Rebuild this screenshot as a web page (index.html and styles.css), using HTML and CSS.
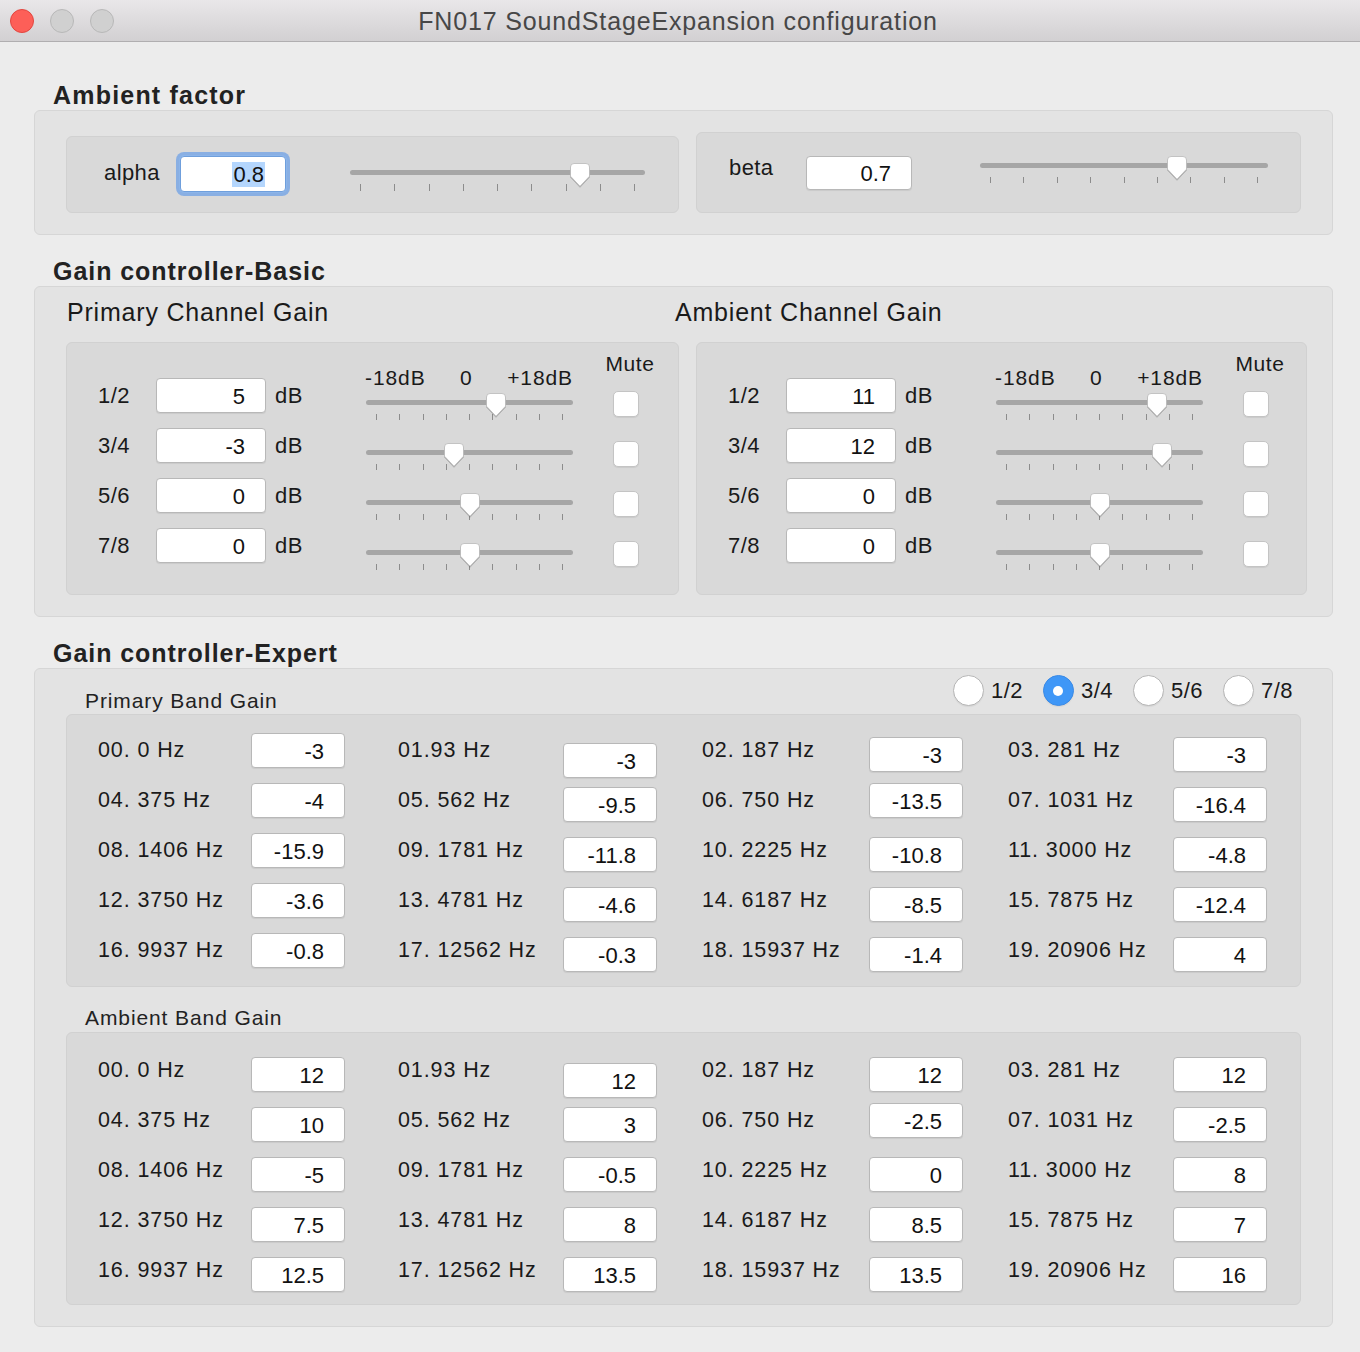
FILE: index.html
```html
<!DOCTYPE html>
<html>
<head>
<meta charset="utf-8">
<title>FN017 SoundStageExpansion configuration</title>
<link rel="stylesheet" href="styles.css">
</head>
<body>
<div class="titlebar">
  <div class="lights"><span class="light close"></span><span class="light"></span><span class="light"></span></div>
  <div class="title">FN017 SoundStageExpansion configuration</div>
  <div></div>
</div>

<div class="content">
  <h2 class="sec-title first">Ambient factor</h2>
  <div class="panel factor-panel">
    <div class="subbox alpha-box">
      <span class="flabel alpha-label">alpha</span>
      <div class="fld alpha-fld focus"><span class="sel">0.8</span></div>
      <div class="slider alpha-slider">
        <div class="track"></div>
        <div class="ticks tall"><i></i><i></i><i></i><i></i><i></i><i></i><i></i><i></i><i></i></div>
        <svg class="thumb" style="left:230px" viewBox="0 0 20 24" width="20" height="24"><path d="M4 .5h12a3.5 3.5 0 0 1 3.5 3.5v9.2L10 23.3.5 13.2V4A3.5 3.5 0 0 1 4 .5z" fill="#fff" stroke="#b9b9b9" stroke-width=".8"/></svg>
      </div>
    </div>
    <div class="subbox beta-box">
      <span class="flabel beta-label">beta</span>
      <div class="fld beta-fld">0.7</div>
      <div class="slider beta-slider">
        <div class="track"></div>
        <div class="ticks"><i></i><i></i><i></i><i></i><i></i><i></i><i></i><i></i><i></i></div>
        <svg class="thumb" style="left:197px" viewBox="0 0 20 24" width="20" height="24"><path d="M4 .5h12a3.5 3.5 0 0 1 3.5 3.5v9.2L10 23.3.5 13.2V4A3.5 3.5 0 0 1 4 .5z" fill="#fff" stroke="#b9b9b9" stroke-width=".8"/></svg>
      </div>
    </div>
  </div>

  <h2 class="sec-title">Gain controller-Basic</h2>
  <div class="panel basic-panel">
    <div class="chan-titles"><span class="chan-title first">Primary Channel Gain</span><span class="chan-title">Ambient Channel Gain</span></div>
    <div class="chan-boxes">
      <div class="subbox chan-box">
        <div class="chead">
          <div class="chead-spacer"></div>
          <div class="scale"><span>-18dB</span><span>0</span><span>+18dB</span></div>
          <div class="mute-label">Mute</div>
        </div>
        <div class="crow">
          <span class="clabel">1/2</span><div class="fld cfld">5</div><span class="cdb">dB</span>
          <div class="slider cslider"><div class="track"></div><div class="ticks"><i></i><i></i><i></i><i></i><i></i><i></i><i></i><i></i><i></i></div><svg class="thumb" style="left:130px" viewBox="0 0 20 24" width="20" height="24"><path d="M4 .5h12a3.5 3.5 0 0 1 3.5 3.5v9.2L10 23.3.5 13.2V4A3.5 3.5 0 0 1 4 .5z" fill="#fff" stroke="#b9b9b9" stroke-width=".8"/></svg></div>
          <span class="cb"></span>
        </div>
        <div class="crow">
          <span class="clabel">3/4</span><div class="fld cfld">-3</div><span class="cdb">dB</span>
          <div class="slider cslider"><div class="track"></div><div class="ticks"><i></i><i></i><i></i><i></i><i></i><i></i><i></i><i></i><i></i></div><svg class="thumb" style="left:88px" viewBox="0 0 20 24" width="20" height="24"><path d="M4 .5h12a3.5 3.5 0 0 1 3.5 3.5v9.2L10 23.3.5 13.2V4A3.5 3.5 0 0 1 4 .5z" fill="#fff" stroke="#b9b9b9" stroke-width=".8"/></svg></div>
          <span class="cb"></span>
        </div>
        <div class="crow">
          <span class="clabel">5/6</span><div class="fld cfld">0</div><span class="cdb">dB</span>
          <div class="slider cslider"><div class="track"></div><div class="ticks"><i></i><i></i><i></i><i></i><i></i><i></i><i></i><i></i><i></i></div><svg class="thumb" style="left:104px" viewBox="0 0 20 24" width="20" height="24"><path d="M4 .5h12a3.5 3.5 0 0 1 3.5 3.5v9.2L10 23.3.5 13.2V4A3.5 3.5 0 0 1 4 .5z" fill="#fff" stroke="#b9b9b9" stroke-width=".8"/></svg></div>
          <span class="cb"></span>
        </div>
        <div class="crow">
          <span class="clabel">7/8</span><div class="fld cfld">0</div><span class="cdb">dB</span>
          <div class="slider cslider"><div class="track"></div><div class="ticks"><i></i><i></i><i></i><i></i><i></i><i></i><i></i><i></i><i></i></div><svg class="thumb" style="left:104px" viewBox="0 0 20 24" width="20" height="24"><path d="M4 .5h12a3.5 3.5 0 0 1 3.5 3.5v9.2L10 23.3.5 13.2V4A3.5 3.5 0 0 1 4 .5z" fill="#fff" stroke="#b9b9b9" stroke-width=".8"/></svg></div>
          <span class="cb"></span>
        </div>
      </div>

      <div class="subbox chan-box right">
        <div class="chead">
          <div class="chead-spacer"></div>
          <div class="scale"><span>-18dB</span><span>0</span><span>+18dB</span></div>
          <div class="mute-label">Mute</div>
        </div>
        <div class="crow">
          <span class="clabel">1/2</span><div class="fld cfld">11</div><span class="cdb">dB</span>
          <div class="slider cslider"><div class="track"></div><div class="ticks"><i></i><i></i><i></i><i></i><i></i><i></i><i></i><i></i><i></i></div><svg class="thumb" style="left:161px" viewBox="0 0 20 24" width="20" height="24"><path d="M4 .5h12a3.5 3.5 0 0 1 3.5 3.5v9.2L10 23.3.5 13.2V4A3.5 3.5 0 0 1 4 .5z" fill="#fff" stroke="#b9b9b9" stroke-width=".8"/></svg></div>
          <span class="cb"></span>
        </div>
        <div class="crow">
          <span class="clabel">3/4</span><div class="fld cfld">12</div><span class="cdb">dB</span>
          <div class="slider cslider"><div class="track"></div><div class="ticks"><i></i><i></i><i></i><i></i><i></i><i></i><i></i><i></i><i></i></div><svg class="thumb" style="left:166px" viewBox="0 0 20 24" width="20" height="24"><path d="M4 .5h12a3.5 3.5 0 0 1 3.5 3.5v9.2L10 23.3.5 13.2V4A3.5 3.5 0 0 1 4 .5z" fill="#fff" stroke="#b9b9b9" stroke-width=".8"/></svg></div>
          <span class="cb"></span>
        </div>
        <div class="crow">
          <span class="clabel">5/6</span><div class="fld cfld">0</div><span class="cdb">dB</span>
          <div class="slider cslider"><div class="track"></div><div class="ticks"><i></i><i></i><i></i><i></i><i></i><i></i><i></i><i></i><i></i></div><svg class="thumb" style="left:104px" viewBox="0 0 20 24" width="20" height="24"><path d="M4 .5h12a3.5 3.5 0 0 1 3.5 3.5v9.2L10 23.3.5 13.2V4A3.5 3.5 0 0 1 4 .5z" fill="#fff" stroke="#b9b9b9" stroke-width=".8"/></svg></div>
          <span class="cb"></span>
        </div>
        <div class="crow">
          <span class="clabel">7/8</span><div class="fld cfld">0</div><span class="cdb">dB</span>
          <div class="slider cslider"><div class="track"></div><div class="ticks"><i></i><i></i><i></i><i></i><i></i><i></i><i></i><i></i><i></i></div><svg class="thumb" style="left:104px" viewBox="0 0 20 24" width="20" height="24"><path d="M4 .5h12a3.5 3.5 0 0 1 3.5 3.5v9.2L10 23.3.5 13.2V4A3.5 3.5 0 0 1 4 .5z" fill="#fff" stroke="#b9b9b9" stroke-width=".8"/></svg></div>
          <span class="cb"></span>
        </div>
      </div>
    </div>
  </div>

  <h2 class="sec-title">Gain controller-Expert</h2>
  <div class="panel expert-panel">
    <div class="band-head">
      <span class="band-title">Primary Band Gain</span>
      <div class="radios">
        <label class="ritem"><span class="radio"></span><span class="rlabel">1/2</span></label>
        <label class="ritem"><span class="radio on"></span><span class="rlabel">3/4</span></label>
        <label class="ritem"><span class="radio"></span><span class="rlabel">5/6</span></label>
        <label class="ritem last"><span class="radio"></span><span class="rlabel">7/8</span></label>
      </div>
    </div>
    <div class="subbox band-box">
      <div class="bgrid">
        <span class="blabel">00. 0 Hz</span><div class="fld bfld">-3</div>
        <span class="blabel">01.93 Hz</span><div class="fld bfld dn2">-3</div>
        <span class="blabel">02. 187 Hz</span><div class="fld bfld dn">-3</div>
        <span class="blabel">03. 281 Hz</span><div class="fld bfld dn">-3</div>

        <span class="blabel">04. 375 Hz</span><div class="fld bfld">-4</div>
        <span class="blabel">05. 562 Hz</span><div class="fld bfld dn">-9.5</div>
        <span class="blabel">06. 750 Hz</span><div class="fld bfld">-13.5</div>
        <span class="blabel">07. 1031 Hz</span><div class="fld bfld dn">-16.4</div>

        <span class="blabel">08. 1406 Hz</span><div class="fld bfld">-15.9</div>
        <span class="blabel">09. 1781 Hz</span><div class="fld bfld dn">-11.8</div>
        <span class="blabel">10. 2225 Hz</span><div class="fld bfld dn">-10.8</div>
        <span class="blabel">11. 3000 Hz</span><div class="fld bfld dn">-4.8</div>

        <span class="blabel">12. 3750 Hz</span><div class="fld bfld">-3.6</div>
        <span class="blabel">13. 4781 Hz</span><div class="fld bfld dn">-4.6</div>
        <span class="blabel">14. 6187 Hz</span><div class="fld bfld dn">-8.5</div>
        <span class="blabel">15. 7875 Hz</span><div class="fld bfld dn">-12.4</div>

        <span class="blabel">16. 9937 Hz</span><div class="fld bfld">-0.8</div>
        <span class="blabel">17. 12562 Hz</span><div class="fld bfld dn">-0.3</div>
        <span class="blabel">18. 15937 Hz</span><div class="fld bfld dn">-1.4</div>
        <span class="blabel">19. 20906 Hz</span><div class="fld bfld dn">4</div>
      </div>
    </div>

    <div class="band-head second">
      <span class="band-title">Ambient Band Gain</span>
    </div>
    <div class="subbox band-box amb">
      <div class="bgrid">
        <span class="blabel">00. 0 Hz</span><div class="fld bfld dn">12</div>
        <span class="blabel">01.93 Hz</span><div class="fld bfld dn2">12</div>
        <span class="blabel">02. 187 Hz</span><div class="fld bfld dn">12</div>
        <span class="blabel">03. 281 Hz</span><div class="fld bfld dn">12</div>

        <span class="blabel">04. 375 Hz</span><div class="fld bfld dn">10</div>
        <span class="blabel">05. 562 Hz</span><div class="fld bfld dn">3</div>
        <span class="blabel">06. 750 Hz</span><div class="fld bfld">-2.5</div>
        <span class="blabel">07. 1031 Hz</span><div class="fld bfld dn">-2.5</div>

        <span class="blabel">08. 1406 Hz</span><div class="fld bfld dn">-5</div>
        <span class="blabel">09. 1781 Hz</span><div class="fld bfld dn">-0.5</div>
        <span class="blabel">10. 2225 Hz</span><div class="fld bfld dn">0</div>
        <span class="blabel">11. 3000 Hz</span><div class="fld bfld dn">8</div>

        <span class="blabel">12. 3750 Hz</span><div class="fld bfld dn">7.5</div>
        <span class="blabel">13. 4781 Hz</span><div class="fld bfld dn">8</div>
        <span class="blabel">14. 6187 Hz</span><div class="fld bfld dn">8.5</div>
        <span class="blabel">15. 7875 Hz</span><div class="fld bfld dn">7</div>

        <span class="blabel">16. 9937 Hz</span><div class="fld bfld dn">12.5</div>
        <span class="blabel">17. 12562 Hz</span><div class="fld bfld dn">13.5</div>
        <span class="blabel">18. 15937 Hz</span><div class="fld bfld dn">13.5</div>
        <span class="blabel">19. 20906 Hz</span><div class="fld bfld dn">16</div>
      </div>
    </div>
  </div>
</div>
</body>
</html>
```

FILE: styles.css
```css
* { box-sizing: border-box; }
html, body { margin: 0; padding: 0; }
body {
  width: 1360px;
  height: 1352px;
  overflow: hidden;
  background: #ececec;
  font-family: "Liberation Sans", Arial, sans-serif;
  color: #1a1a1a;
}

/* ---------- title bar ---------- */
.titlebar {
  height: 42px;
  background: linear-gradient(#e9e7e9, #d2d0d2);
  border-bottom: 1px solid #b0aeb0;
  display: grid;
  grid-template-columns: 1fr auto 1fr;
  align-items: center;
}
.lights { display: flex; gap: 16px; padding-left: 10px; }
.light {
  width: 24px; height: 24px; border-radius: 50%;
  background: #d0d0d0; border: 1px solid #b8b8b8;
}
.light.close { background: #fd5f58; border-color: #e2463f; }
.title {
  font-size: 25px;
  letter-spacing: 0.85px;
  color: #474747;
  line-height: 28px;
  margin-left: -4px;
}

/* ---------- content ---------- */
.content { padding: 0 27px 0 34px; }
.sec-title {
  margin: 22px 0 1px 19px;
  font-size: 25px;
  line-height: 28px;
  font-weight: bold;
  letter-spacing: 0.95px;
  color: #222;
}
.sec-title.first { margin-top: 39px; letter-spacing: 1.2px; }

.panel {
  background: #e3e3e3;
  border: 1px solid #d6d6d6;
  border-radius: 6px;
}
.subbox {
  background: #d9d9d9;
  border: 1px solid #d1d1d1;
  border-radius: 6px;
}

/* fields */
.fld {
  background: #fff;
  border: 1px solid #b8b8b8;
  border-radius: 4px;
  box-shadow: 0 1px 1px rgba(0,0,0,0.07);
  text-align: right;
  padding: 2px 20px 0 0;
  font-size: 22px;
  line-height: 31px;
  height: 35px;
  color: #111;
}

/* sliders */
.slider { position: relative; }
.track { height: 5px; border-radius: 3px; background: #a6a6a6; }
.ticks {
  display: flex; justify-content: space-between;
  padding: 0 10px; margin-top: 9px; height: 6px;
}
.ticks.tall { height: 7px; }
.ticks i { display: block; width: 1px; height: 100%; background: #8c8c8c; }
.thumb {
  position: absolute; top: -7px; margin-left: -10px;
  filter: drop-shadow(0 1px 0.6px rgba(0,0,0,0.22));
}

/* ambient factor */
.factor-panel {
  height: 125px;
  padding: 21px 31px;
  display: flex;
  align-items: flex-end;
  gap: 17px;
}
.alpha-box {
  width: 613px; height: 77px;
  display: flex; align-items: flex-start;
  padding: 19px 0 0 37px;
}
.flabel { font-size: 22px; letter-spacing: 0.4px; }
.alpha-label { width: 76px; line-height: 33px; }
.alpha-fld {
  width: 106px; height: 36px; line-height: 32px;
}
.focus {
  border-color: #6f9fdc;
  box-shadow: 0 0 0 1px #8cb5ea, 0 0 0 4px rgba(110, 160, 230, 0.75);
}
.sel { background: #b4d6fd; padding: 0 1px; }
.alpha-slider { width: 295px; margin: 13.5px 0 0 64px; }

.beta-box {
  width: 605px; height: 81px;
  display: flex; align-items: flex-start;
  padding: 23px 0 0 32px;
}
.beta-label { width: 77px; line-height: 24px; }
.beta-fld { width: 106px; height: 34px; line-height: 30px; }
.beta-slider { width: 288px; margin: 6.5px 0 0 68px; }

/* basic */
.basic-panel { padding: 11px 25px 21px 31px; }
.chan-titles { display: flex; height: 28px; margin-bottom: 16px; }
.chan-title { font-size: 25px; line-height: 28px; letter-spacing: 0.8px; }
.chan-title.first { width: 609px; padding-left: 1px; }
.chan-boxes { display: flex; gap: 17px; }
.chan-box { width: 613px; height: 253px; padding: 9px 0 0 31px; }
.chan-box.right { width: 611px; }
.chead { display: flex; height: 26px; align-items: flex-start; }
.chead-spacer { width: 268px; }
.scale {
  width: 208px; margin-left: -1px; margin-top: 14px;
  display: flex; justify-content: space-between;
  font-size: 21px; line-height: 24px; letter-spacing: 0.9px;
}
.mute-label {
  margin-left: 31px; width: 52px; text-align: center;
  font-size: 21px; line-height: 24px; letter-spacing: 0.6px;
}
.crow { display: flex; height: 50px; align-items: flex-start; }
.clabel { width: 58px; line-height: 35px; font-size: 22px; letter-spacing: 0.5px; }
.cfld { width: 110px; }
.cdb { width: 100px; padding-left: 9px; line-height: 35px; font-size: 22px; letter-spacing: 0.5px; }
.cslider { width: 207px; margin-top: 21.5px; }
.cb {
  display: block; width: 26px; height: 26px; margin: 13px 0 0 40px;
  background: #fff; border: 1px solid #c4c4c4; border-radius: 5px;
  box-shadow: 0 1px 1px rgba(0,0,0,0.07);
}

/* expert */
.expert-panel { padding: 5px 31px 21px 31px; }
.band-head {
  height: 40px; display: flex; justify-content: space-between;
  padding: 0 8px 0 19px;
}
.band-head.second { height: 45px; }
.band-title {
  align-self: flex-end;
  font-size: 21px; line-height: 26px; letter-spacing: 0.9px;
  color: #222;
}
.band-head.second .band-title { margin-bottom: 1px; }
.radios { display: flex; margin-top: 1px; }
.ritem { display: flex; align-items: center; width: 90px; height: 31px; }
.ritem.last { width: auto; }
.radio {
  width: 31px; height: 31px; border-radius: 50%;
  background: #fff; border: 1px solid #b6b6b6;
  box-shadow: 0 1px 1px rgba(0,0,0,0.06);
  display: flex; align-items: center; justify-content: center;
  margin-right: 7px;
}
.radio.on { background: #3f97f7; border-color: #3a8ae6; }
.radio.on::after {
  content: ""; width: 10px; height: 10px; border-radius: 50%; background: #fff;
}
.rlabel { font-size: 22px; letter-spacing: 0.5px; }

.band-box { height: 273px; padding: 10px 0 0 31px; }
.band-box.amb { padding-top: 12px; }
.bgrid {
  display: grid;
  grid-template-columns: 153px 94px 218px 94px 212px 94px 210px 95px;
  grid-auto-rows: 50px;
  align-items: center;
}
.bgrid > :nth-child(8n+3) { padding-left: 53px; }
.bgrid > :nth-child(8n+5),
.bgrid > :nth-child(8n+7) { padding-left: 45px; }
.blabel { font-size: 21.5px; letter-spacing: 0.9px; line-height: 26px; color: #1a1a1a; }
.bfld { width: 94px; font-size: 22px; }
.bfld.dn { margin-top: 8px; }
.bfld.dn2 { margin-top: 20px; }
```
